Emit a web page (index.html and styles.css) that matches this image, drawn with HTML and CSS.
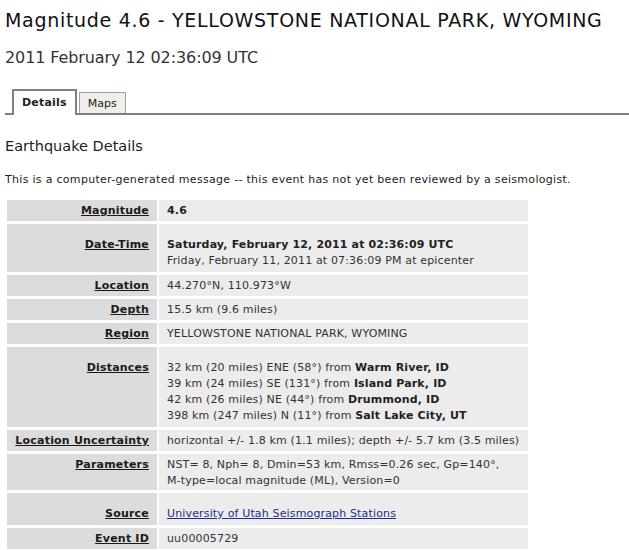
FILE: index.html
```html
<!DOCTYPE html>
<html lang="en">
<head>
    <meta charset="UTF-8">
    <title>Magnitude 4.6 - YELLOWSTONE NATIONAL PARK, WYOMING</title>
    <link rel="stylesheet" href="styles.css">
</head>
<body>
    <h1 class="event-title">Magnitude 4.6 - YELLOWSTONE NATIONAL PARK, WYOMING</h1>
    <h2 class="event-time">2011 February 12 02:36:09 UTC</h2>

    <div class="tabs">
        <span class="tab active">Details</span>
        <span class="tab">Maps</span>
    </div>

    <h3 class="section-title">Earthquake Details</h3>
    <p class="notice">This is a computer-generated message -- this event has not yet been reviewed by a seismologist.</p>

    <table class="details">
        <tr>
            <th><a href="#">Magnitude</a></th>
            <td><strong>4.6</strong></td>
        </tr>
        <tr>
            <th><a href="#">Date-Time</a></th>
            <td class="spaced"><strong>Saturday, February 12, 2011 at 02:36:09 UTC</strong><br>Friday, February 11, 2011 at 07:36:09 PM at epicenter</td>
        </tr>
        <tr>
            <th><a href="#">Location</a></th>
            <td>44.270°N, 110.973°W</td>
        </tr>
        <tr>
            <th><a href="#">Depth</a></th>
            <td>15.5 km (9.6 miles)</td>
        </tr>
        <tr>
            <th><a href="#">Region</a></th>
            <td>YELLOWSTONE NATIONAL PARK, WYOMING</td>
        </tr>
        <tr>
            <th><a href="#">Distances</a></th>
            <td class="spaced">32 km (20 miles) ENE (58°) from <strong>Warm River, ID</strong><br>
                39 km (24 miles) SE (131°) from <strong>Island Park, ID</strong><br>
                42 km (26 miles) NE (44°) from <strong>Drummond, ID</strong><br>
                398 km (247 miles) N (11°) from <strong>Salt Lake City, UT</strong></td>
        </tr>
        <tr>
            <th><a href="#">Location Uncertainty</a></th>
            <td>horizontal +/- 1.8 km (1.1 miles); depth +/- 5.7 km (3.5 miles)</td>
        </tr>
        <tr>
            <th><a href="#">Parameters</a></th>
            <td class="tight">NST=&nbsp;8, Nph=&nbsp;8, Dmin=53 km, Rmss=0.26 sec, Gp=140°,<br>M-type=local magnitude (ML), Version=0</td>
        </tr>
        <tr>
            <th><a href="#">Source</a></th>
            <td class="spaced"><a class="source" href="#">University of Utah Seismograph Stations</a></td>
        </tr>
        <tr>
            <th><a href="#">Event ID</a></th>
            <td>uu00005729</td>
        </tr>
    </table>
</body>
</html>
```

FILE: styles.css
```css
body {
    font-family: 'DejaVu Sans', sans-serif;
    margin: 0;
    padding: 5px 0 0 5px;
    background-color: #ffffff;
    color: #333;
}
.event-title {
    font-size: 19px;
    font-weight: normal;
    letter-spacing: 0.7px;
    color: #111;
    margin: 4px 0 0 0;
    line-height: 22px;
}
.event-time {
    font-size: 16px;
    font-weight: normal;
    letter-spacing: -0.1px;
    color: #333;
    margin: 18px 0 0 0;
    line-height: 18px;
}
.tabs {
    display: flex;
    align-items: flex-end;
    gap: 2px;
    margin-top: 24px;
    padding-left: 7px;
    border-bottom: 2px solid #808080;
    height: 22px;
}
.tab {
    font-size: 11px;
    color: #222;
    background-color: #efeee8;
    border: 1px solid #a0a0a0;
    border-bottom: none;
    height: 20px;
    line-height: 22px;
    padding: 0 8px;
}
.tab.active {
    font-weight: bold;
    letter-spacing: 0.2px;
    background-color: #ffffff;
    border: 2px solid #808080;
    border-bottom: none;
    height: 24px;
    line-height: 24px;
    margin-bottom: -2px;
    padding: 0 8px;
}
.section-title {
    font-size: 14.5px;
    font-weight: normal;
    color: #222;
    margin: 22px 0 0 0;
    line-height: 18px;
}
.notice {
    font-size: 11px;
    letter-spacing: 0.3px;
    color: #222;
    margin: 17px 0 0 0;
    line-height: 16px;
}
.details {
    border-spacing: 2px 3px;
    margin-top: 9px;
    width: 525px;
    font-size: 11px;
    line-height: 16px;
}
.details th,
.details td {
    vertical-align: baseline;
    padding: 3px 8px 2px 8px;
}
.details th {
    width: 134px;
    text-align: right;
    white-space: nowrap;
    letter-spacing: 0.2px;
    background-color: #dcdcdc;
}
.details th a {
    color: #1a1a1a;
    text-decoration: underline;
}
.details td {
    padding-right: 2px;
    white-space: nowrap;
    letter-spacing: 0.15px;
    background-color: #ececec;
    color: #333;
}
.details td strong {
    color: #222;
}
/* rows that start with an empty line in the original */
.details td.spaced {
    padding-top: 13px;
    padding-bottom: 3px;
}
.details td.tight {
    padding-top: 2px;
    padding-bottom: 1px;
}
.source {
    color: #1f2d8a;
}
```
